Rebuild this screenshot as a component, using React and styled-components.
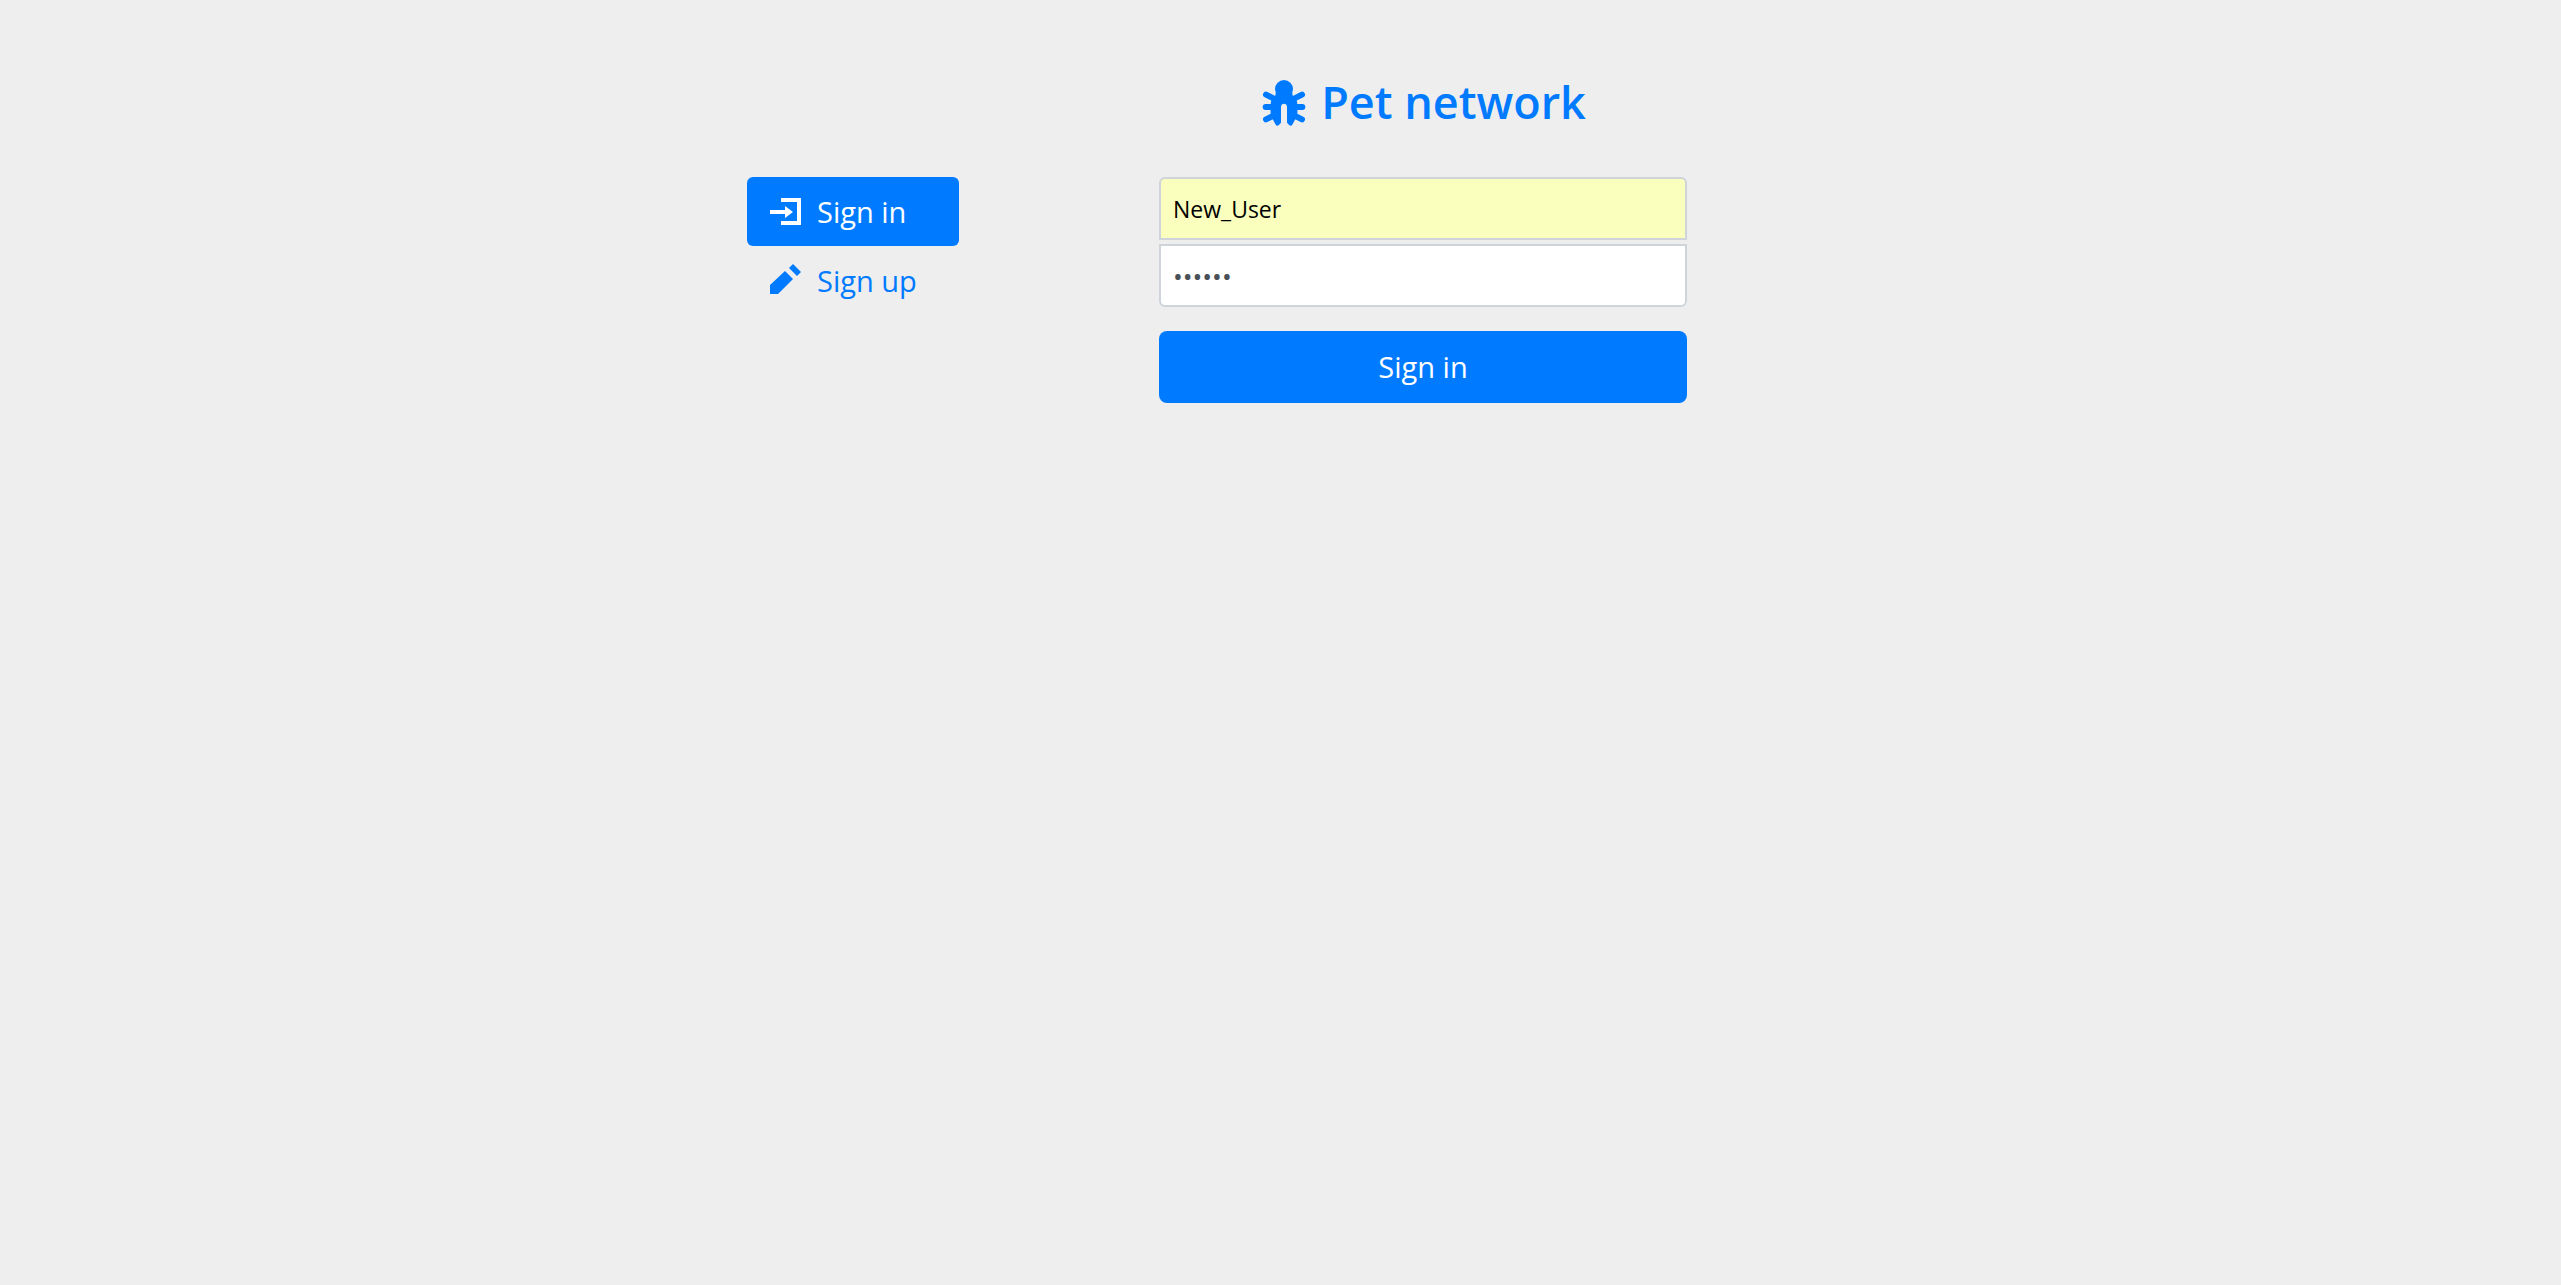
import React from "react";
import styled, { createGlobalStyle } from "styled-components";

const BLUE = "#007bff";

const GlobalStyle = createGlobalStyle`
  *, *::before, *::after { box-sizing: border-box; }
  body {
    margin: 0;
    background: #eeeeee;
    font-family: "Open Sans", "Noto Sans", sans-serif;
    font-size: 24px;
    line-height: 36px;
  }
`;

const Page = styled.main`
  display: grid;
  grid-template-columns: 212px minmax(0, 528px);
  column-gap: 200px;
  max-width: 1709px;
  margin: 0 auto;
  padding: 72px 22px 72px 321px;

  @media (max-width: 1400px) {
    column-gap: 48px;
    padding-left: 22px;
  }
`;

const Title = styled.h1`
  grid-column: 2;
  display: flex;
  align-items: center;
  justify-content: center;
  gap: 13px;
  margin: 0 0 45px;
  color: ${BLUE};
  font-size: 45px;
  font-weight: 600;
  line-height: 60px;
`;

const Nav = styled.nav`
  display: flex;
  flex-direction: column;
`;

const NavLink = styled.a`
  display: flex;
  align-items: center;
  gap: 13px;
  height: 69px;
  padding: 0 22px;
  border-radius: 6px;
  background: ${({ $active }) => ($active ? BLUE : "transparent")};
  color: ${({ $active }) => ($active ? "#ffffff" : BLUE)};
  font-size: 29px;
  line-height: 44px;
  text-decoration: none;
`;

const Icon = styled.svg`
  flex: none;
  display: block;
  width: ${({ $size }) => $size}px;
  height: ${({ $size }) => $size}px;
  fill: currentColor;
`;

const Form = styled.form`
  display: flex;
  flex-direction: column;
`;

const Fields = styled.div`
  display: flex;
  flex-direction: column;
  gap: 4px;
  margin-bottom: 24px;
`;

const Input = styled.input`
  width: 100%;
  height: 63px;
  padding: 1px 12px 0;
  border: 2px solid #ced4da;
  border-radius: ${({ $last }) => ($last ? "0 0 6px 6px" : "6px 6px 0 0")};
  outline: none;
  background: ${({ $filled }) => ($filled ? "#faffbd" : "#ffffff")};
  color: ${({ $filled }) => ($filled ? "#000000" : "#495057")};
  font-family: inherit;
  font-size: ${({ $last }) => ($last ? 26 : 23)}px;
`;

const Submit = styled.button`
  height: 72px;
  padding: 0 24px;
  border: 0;
  border-radius: 8px;
  background: ${BLUE};
  color: #ffffff;
  font-family: inherit;
  font-size: 29px;
  line-height: 44px;
  cursor: pointer;
`;

const BugIcon = () => (
  <Icon $size={48} viewBox="18 24 144 144" aria-hidden="true">
    <path
      d="M36 74L64 88M144 74L116 88M35 111H60M145 111H120M36 148L60 136M144 148L120 136"
      fill="none"
      stroke="currentColor"
      strokeWidth="18"
      strokeLinecap="round"
    />
    <circle cx="90" cy="57" r="27" />
    <path d="M65 68H115C115 80 122 86 129 94C131 110 131 126 129 138L114 166C112 168 108 168 106 166L99 158V110C99 98 81 98 81 110V158L74 166C72 168 68 168 66 166L51 138C49 126 49 110 51 94C58 86 65 80 65 68Z" />
  </Icon>
);

const SignInIcon = () => (
  <Icon $size={35} viewBox="0 0 35 35" aria-hidden="true">
    <path d="M12 4h20v27H12v-4h16V8H12zM1 16h15v-4l8 6-8 6v-4H1z" />
  </Icon>
);

const PencilIcon = () => (
  <Icon $size={35} viewBox="0 0 35 35" aria-hidden="true">
    <path d="M1 31v-9L16 8l8 8L9 31zM20 5l4-4 8 8-4 4z" />
  </Icon>
);

export default function App() {
  return (
    <>
      <GlobalStyle />
      <Page>
        <Title>
          <BugIcon />
          Pet network
        </Title>
        <Nav aria-label="Account">
          <NavLink href="#sign-in" $active aria-current="page">
            <SignInIcon />
            Sign in
          </NavLink>
          <NavLink href="#sign-up">
            <PencilIcon />
            Sign up
          </NavLink>
        </Nav>
        <Form onSubmit={(event) => event.preventDefault()}>
          <Fields>
            <Input type="text" name="username" aria-label="Username" defaultValue="New_User" $filled />
            <Input type="password" name="password" aria-label="Password" defaultValue="secret" $last />
          </Fields>
          <Submit type="submit">Sign in</Submit>
        </Form>
      </Page>
    </>
  );
}
